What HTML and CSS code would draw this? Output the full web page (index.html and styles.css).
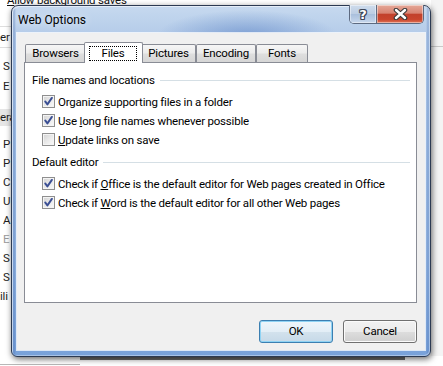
FILE: index.html
```html
<!DOCTYPE html>
<html>
<head>
<meta charset="utf-8">
<link rel="stylesheet" href="styles.css">
</head>
<body>
<div class="desk">
  <div class="bg">
    <div class="bg-main">
      <div class="bg-left">
        <div class="bg-top"><u>A</u>llow background saves</div>
        <div class="bg-row bg-lined">er</div>
        <div class="bg-row bg-s1">S</div>
        <div class="bg-row">E</div>
        <div class="bg-band">era</div>
        <div class="bg-row bg-s2">P</div>
        <div class="bg-row r19">P</div>
        <div class="bg-row r19">C</div>
        <div class="bg-row r19">U</div>
        <div class="bg-row r19">A</div>
        <div class="bg-row r19 bg-dis">E</div>
        <div class="bg-row r19">S</div>
        <div class="bg-row r19">S</div>
        <div class="bg-row r19 bg-cut">ili</div>
      </div>
      <div class="bg-right"><div class="bg-right-line"></div></div>
    </div>
    <div class="bg-bottom">
      <div class="bg-tab1"></div>
      <div class="bg-shadowbar"></div>
    </div>
  </div>

  <div class="dialog">
    <div class="titlebar">
      <span class="title">Web Options</span>
      <div class="caption-btns">
        <div class="cbtn help"><span class="qmark">?</span></div>
        <div class="cbtn close">
          <svg width="15" height="12" viewBox="0 0 15 12">
            <path d="M3 2 L12 10 M12 2 L3 10" stroke="#3a3a3a" stroke-width="4.6" stroke-linecap="round"/>
            <path d="M3 2 L12 10 M12 2 L3 10" stroke="#ffffff" stroke-width="2.4" stroke-linecap="round"/>
          </svg>
        </div>
      </div>
    </div>
    <div class="client">
      <div class="tabs">
        <div class="tab tab-browsers">Browsers</div>
        <div class="tab tab-files selected"><span class="focus">Files</span></div>
        <div class="tab tab-pictures">Pictures</div>
        <div class="tab tab-encoding">Encoding</div>
        <div class="tab tab-fonts">Fonts</div>
      </div>
      <div class="panel">
        <div class="group-h"><span>File names and locations</span><i class="rule"></i></div>
        <div class="cb first">
          <span class="box"><svg width="11" height="11" viewBox="0 0 11 11"><path d="M2.2 5.4 L4.4 8.4 L8.9 1.9" fill="none" stroke="#3b4f94" stroke-width="1.9" stroke-linejoin="round" stroke-linecap="round"/></svg></span>
          <span>Organize <u>s</u>upporting files in a folder</span>
        </div>
        <div class="cb">
          <span class="box"><svg width="11" height="11" viewBox="0 0 11 11"><path d="M2.2 5.4 L4.4 8.4 L8.9 1.9" fill="none" stroke="#3b4f94" stroke-width="1.9" stroke-linejoin="round" stroke-linecap="round"/></svg></span>
          <span>Use <u>l</u>ong file names whenever possible</span>
        </div>
        <div class="cb">
          <span class="box"></span>
          <span><u>U</u>pdate links on save</span>
        </div>
        <div class="group-h second"><span>Default editor</span><i class="rule"></i></div>
        <div class="cb first">
          <span class="box"><svg width="11" height="11" viewBox="0 0 11 11"><path d="M2.2 5.4 L4.4 8.4 L8.9 1.9" fill="none" stroke="#3b4f94" stroke-width="1.9" stroke-linejoin="round" stroke-linecap="round"/></svg></span>
          <span>Check if <u>O</u>ffice is the default editor for Web pages created in Office</span>
        </div>
        <div class="cb">
          <span class="box"><svg width="11" height="11" viewBox="0 0 11 11"><path d="M2.2 5.4 L4.4 8.4 L8.9 1.9" fill="none" stroke="#3b4f94" stroke-width="1.9" stroke-linejoin="round" stroke-linecap="round"/></svg></span>
          <span>Check if <u>W</u>ord is the default editor for all other Web pages</span>
        </div>
      </div>
      <div class="buttons">
        <div class="btn default">OK</div>
        <div class="btn">Cancel</div>
      </div>
    </div>
  </div>
</div>
</body>
</html>
```

FILE: styles.css
```css
html, body {
  margin: 0;
  padding: 0;
}
body {
  width: 443px;
  height: 366px;
  overflow: hidden;
  background: #ffffff;
  font-family: Roboto, "Noto Sans", "DejaVu Sans", sans-serif;
  font-size: 11.5px;
  letter-spacing: -0.2px;
  color: #000;
}
.desk {
  position: relative;
  width: 443px;
  height: 366px;
  overflow: hidden;
}

/* ---------- background page ---------- */
.bg {
  display: flex;
  flex-direction: column;
  height: 366px;
}
.bg-main {
  display: flex;
  height: 356px;
}
.bg-left {
  flex: 1;
  display: flex;
  flex-direction: column;
  color: #1e1e1e;
}
.bg-top {
  margin-top: -8px;
  height: 16px;
  line-height: 16px;
  padding-left: 7px;
  white-space: nowrap;
  color: #111;
}
.bg-row {
  height: 20px;
  line-height: 20px;
  padding-left: 3px;
  white-space: nowrap;
}
.bg-row.r19 {
  height: 19px;
  line-height: 19px;
}
.bg-lined {
  margin-top: 18px;
  height: 20px;
  border-top: 1px solid #dedede;
  border-bottom: 1px solid #dedede;
  padding-left: 0;
}
.bg-s1 {
  margin-top: 8px;
}
.bg-band {
  margin-top: 13px;
  height: 17px;
  line-height: 17px;
  background: #e6e6e6;
  white-space: nowrap;
}
.bg-s2 {
  margin-top: 8px;
}
.bg-dis {
  color: #9a9a9a;
}
.bg-cut {
  padding-left: 0;
}
.bg-right {
  width: 12px;
  background: #f4f4f4;
}
.bg-right-line {
  margin-top: 46px;
  height: 1px;
  background: #c9c9c9;
}
.bg-bottom {
  height: 10px;
  display: flex;
}
.bg-tab1 {
  width: 80px;
  margin-top: 8px;
  border-top: 1px solid #b8b8b8;
}
.bg-shadowbar {
  width: 325px;
  height: 4px;
  background: #6c6c6c;
}

/* ---------- dialog window ---------- */
.dialog {
  position: absolute;
  left: 11px;
  top: 5px;
  width: 420px;
  height: 352px;
  box-sizing: border-box;
  border: 1px solid #2c3a52;
  border-radius: 7px 7px 6px 6px;
  padding: 0 5px 6px 5px;
  display: flex;
  flex-direction: column;
  background:
    radial-gradient(ellipse 90px 26px at 235px 30px, rgba(70, 115, 190, 0.5), rgba(70, 115, 190, 0)),
    linear-gradient(to right, rgba(60, 100, 170, 0) 0px, rgba(60, 100, 170, 0.35) 2px, rgba(60, 100, 170, 0) 4px, rgba(60, 100, 170, 0) 414px, rgba(60, 100, 170, 0.3) 416px, rgba(60, 100, 170, 0) 418px),
    linear-gradient(to bottom, #c6d9ef 0px, #b5cce9 28px, #a6c2e6 120px, #91b3e0 260px, #78a1d9 352px);
  box-shadow: 1px 2px 6px rgba(0, 0, 0, 0.6), inset 1px 1px 0 rgba(255, 255, 255, 0.55), inset -1px -1px 0 rgba(255, 255, 255, 0.35);
}
.titlebar {
  height: 27px;
  display: flex;
  align-items: flex-start;
  justify-content: space-between;
}
.title {
  padding-left: 1px;
  line-height: 28px;
  font-size: 12px;
  letter-spacing: 0;
  color: #000;
  text-shadow: 0 0 8px rgba(255, 255, 255, 0.9);
}
.caption-btns {
  display: flex;
  margin-top: -1px;
  margin-right: 1px;
  height: 19px;
  border: 1px solid #5d6a80;
  border-top: none;
  border-radius: 0 0 5px 5px;
  overflow: hidden;
  box-sizing: border-box;
}
.cbtn {
  height: 18px;
  display: flex;
  align-items: center;
  justify-content: center;
  box-shadow: inset 0 0 0 1px rgba(255, 255, 255, 0.45);
}
.help {
  width: 26px;
  border-right: 1px solid #5d6a80;
  background: linear-gradient(to bottom, #cfdcec 0%, #bccde3 50%, #a9bfdc 51%, #c7d7ec 100%);
}
.qmark {
  font-family: "DejaVu Sans", sans-serif;
  font-weight: bold;
  font-size: 13px;
  line-height: 13px;
  letter-spacing: 0;
  color: #ffffff;
  text-shadow: 1px 0 0 #3d4658, -1px 0 0 #3d4658, 0 1px 0 #3d4658, 0 -1px 0 #3d4658, 1px 1px 0 #3d4658, -1px -1px 0 #3d4658, 1px -1px 0 #3d4658, -1px 1px 0 #3d4658;
}
.close {
  width: 46px;
  background: linear-gradient(to bottom, #e5a898 0%, #d88473 45%, #c2412c 52%, #c9452d 80%, #e07457 100%);
}
.close svg {
  display: block;
}

/* ---------- client area ---------- */
.client {
  flex: 1;
  background: #f0f0f0;
  padding: 9px 8px 7px 7px;
  display: flex;
  flex-direction: column;
  box-shadow: 0 0 0 1px rgba(255, 255, 255, 0.75);
  min-height: 0;
}
.tabs {
  display: flex;
  align-items: flex-end;
  height: 21px;
  padding-left: 1px;
  margin-bottom: -1px;
}
.tab {
  box-sizing: border-box;
  height: 18px;
  margin-bottom: 1px;
  border: 1px solid #898c95;
  border-bottom: none;
  border-radius: 2px 2px 0 0;
  background: linear-gradient(to bottom, #f6f6f6 0%, #ececec 45%, #dedede 55%, #d6d6d6 100%);
  text-align: center;
  line-height: 17px;
  white-space: nowrap;
}
.tab-browsers { width: 61px; }
.tab-files { width: 55px; }
.tab-pictures { width: 55px; }
.tab-encoding { width: 60px; }
.tab-fonts { width: 52px; }
.tab.selected {
  position: relative;
  z-index: 1;
  width: 59px;
  height: 21px;
  margin: 0 -2px;
  background: #ffffff;
}
.focus {
  display: block;
  margin: 3px 5px 0 4px;
  height: 15px;
  line-height: 15px;
  box-sizing: border-box;
  outline: 1px dotted #000;
  outline-offset: -1px;
}
.panel {
  flex: 1;
  background: #ffffff;
  border: 1px solid #898c95;
  display: flex;
  flex-direction: column;
}
.group-h {
  display: flex;
  align-items: center;
  gap: 5px;
  height: 16px;
  margin-top: 9px;
  padding-left: 7px;
  padding-right: 6px;
  white-space: nowrap;
}
.group-h.second {
  margin-top: 5px;
}
.rule {
  flex: 1;
  height: 1px;
  background: #d5dfe5;
}
.cb {
  display: flex;
  align-items: center;
  gap: 3px;
  height: 19px;
  padding-left: 17px;
  white-space: nowrap;
}
.cb.first {
  margin-top: 4px;
}
.box {
  width: 13px;
  height: 13px;
  box-sizing: border-box;
  border: 1px solid #8f8f8f;
  background: linear-gradient(135deg, #d2d2d2 0%, #e9e9e9 50%, #fbfbfb 100%);
  box-shadow: inset 0 0 0 1px #f4f4f4;
  display: flex;
  align-items: center;
  justify-content: center;
  flex: none;
}
.box svg {
  display: block;
}

/* ---------- buttons ---------- */
.buttons {
  display: flex;
  justify-content: flex-end;
  gap: 10px;
  margin-top: 17px;
}
.btn {
  width: 74px;
  height: 23px;
  box-sizing: border-box;
  border: 1px solid #707070;
  border-radius: 3px;
  background: linear-gradient(to bottom, #f2f2f2 0%, #ebebeb 50%, #dddddd 51%, #cfcfcf 100%);
  box-shadow: inset 0 0 0 1px #fbfbfb;
  text-align: center;
  line-height: 21px;
}
.btn.default {
  border-color: #3c7fb1;
  background: linear-gradient(to bottom, #eef6fb 0%, #e3eef6 50%, #d3e2ed 51%, #c6d9e8 100%);
  box-shadow: inset 0 0 0 1px #8fd3f4;
}
```
